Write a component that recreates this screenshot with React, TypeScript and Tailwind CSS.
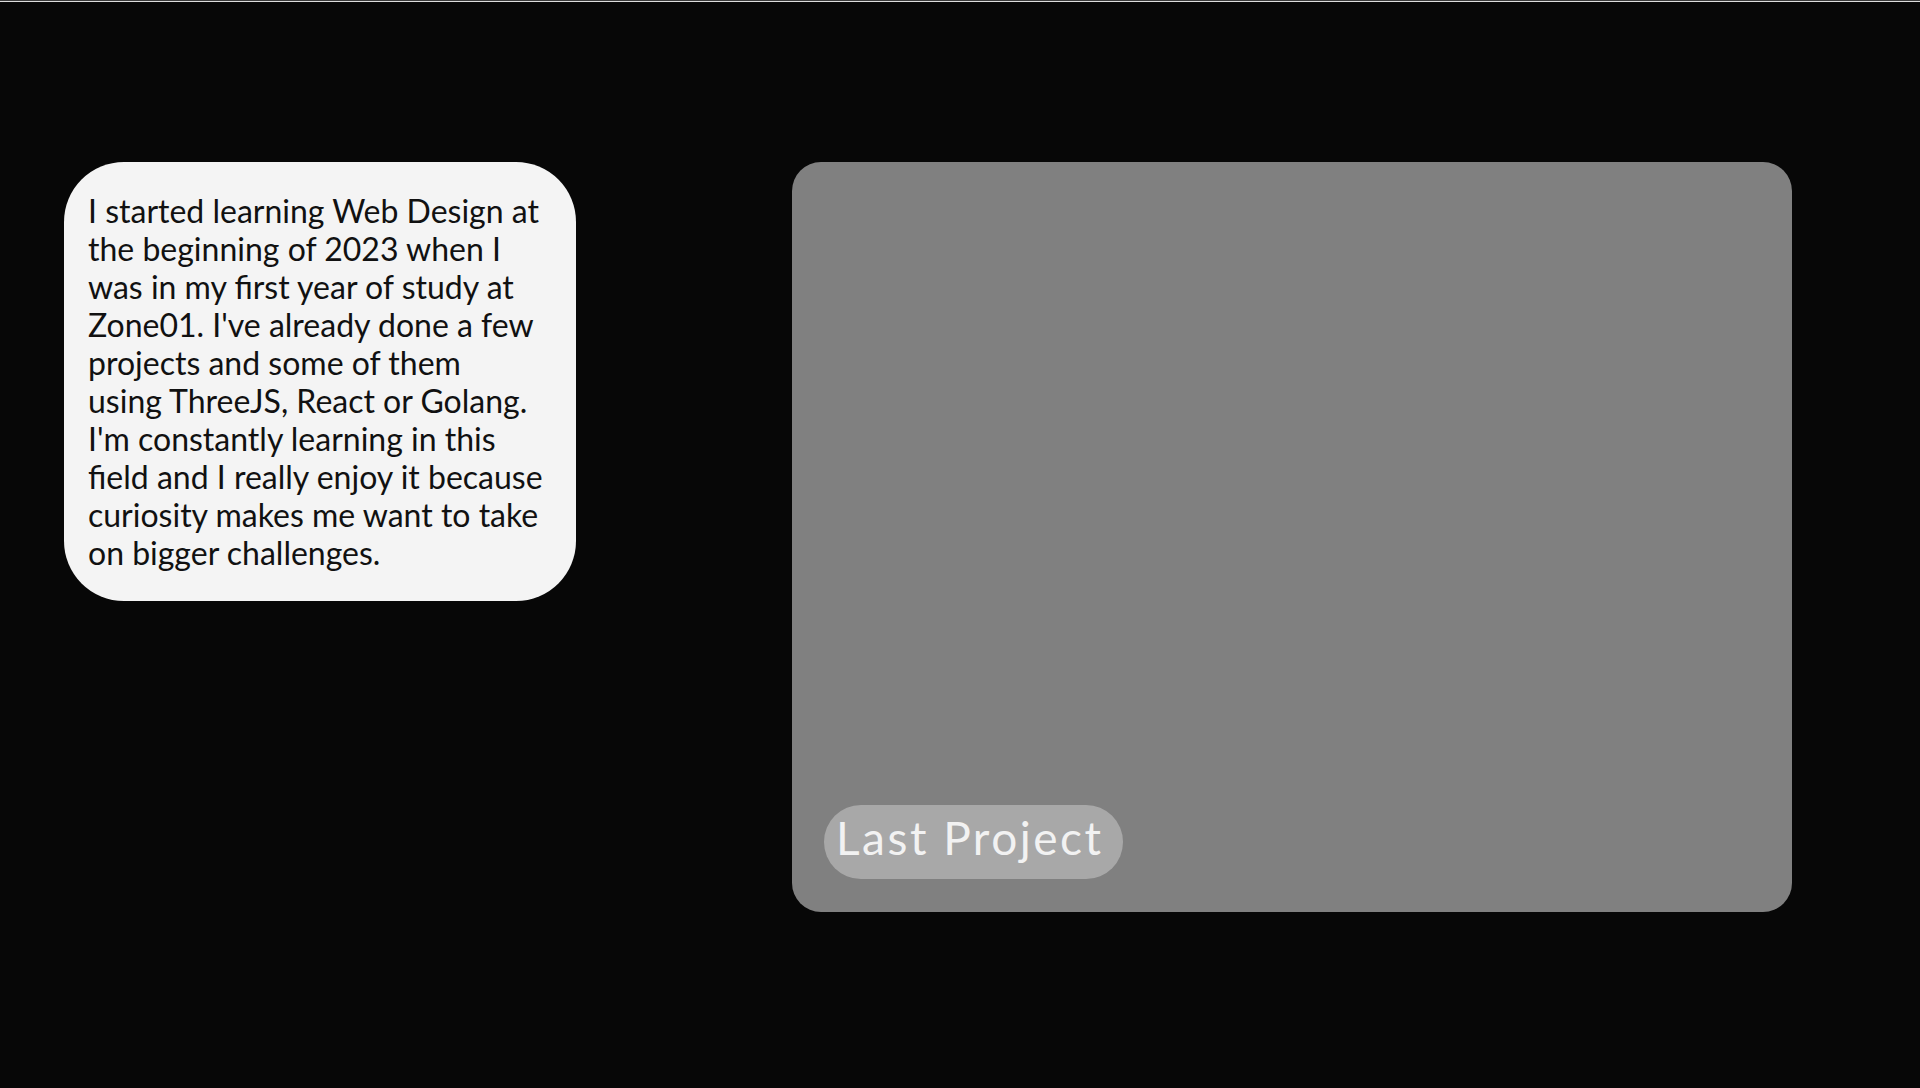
const lines = [
  "I started learning Web Design at",
  "the beginning of 2023 when I",
  "was in my first year of study at",
  "Zone01. I've already done a few",
  "projects and some of them",
  "using ThreeJS, React or Golang.",
  "I'm constantly learning in this",
  "field and I really enjoy it because",
  "curiosity makes me want to take",
  "on bigger challenges.",
];

export default function App() {
  return (
    <div className="w-[1920px] h-[1088px] bg-[#070707] overflow-hidden flex flex-col" style={{ fontFamily: "Lato, 'Open Sans', sans-serif" }}>
      <div className="h-[1px] bg-[#3a3a3a]" />
      <div className="h-[1px] bg-[#dcdcdc]" />
      <div className="flex items-start pl-[64px] pt-[160px] gap-[216px]">
        <div className="w-[512px] h-[439px] bg-[#f4f4f4] rounded-[60px] pl-[24px] pt-[30px] text-[32px] leading-[38px] text-[#111111] whitespace-nowrap">
          {lines.map((l, i) => (
            <div key={i}>{l}</div>
          ))}
        </div>
        <div className="w-[1000px] h-[750px] bg-[#808080] rounded-[29px] flex flex-col justify-end pl-[32px] pb-[33px]">
          <div className="self-start h-[74px] w-[299px] rounded-full bg-[#a8a8a8] flex items-center pl-[12px] pb-[9px] text-[46px] leading-[46px] tracking-[2.5px] text-[#f2f2f2]">
            Last Project
          </div>
        </div>
      </div>
    </div>
  );
}
